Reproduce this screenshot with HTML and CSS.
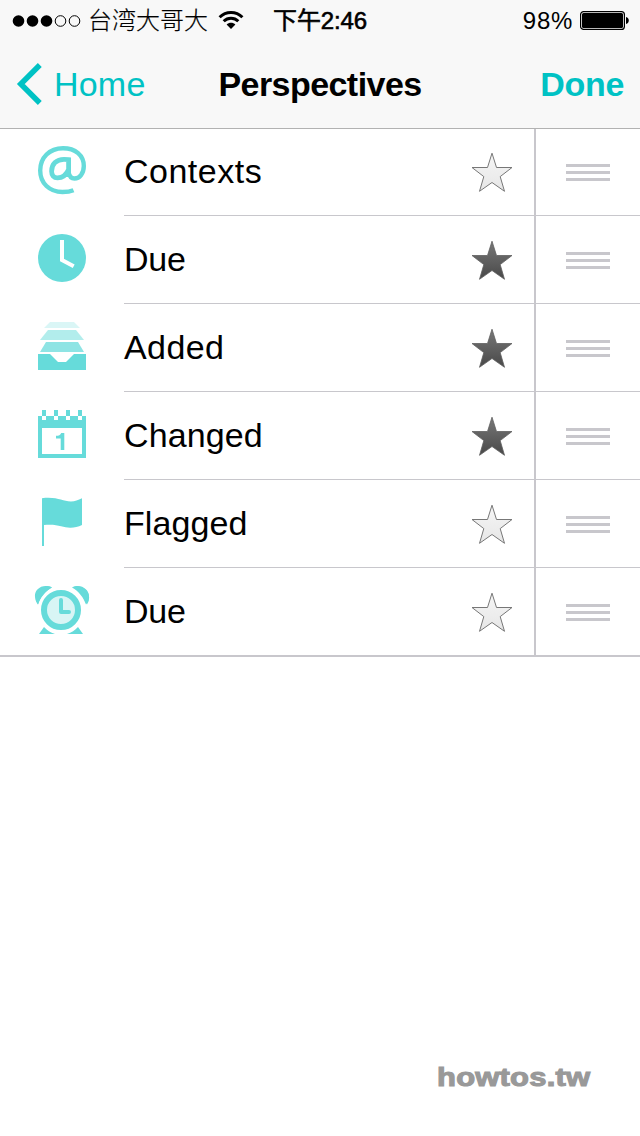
FILE: index.html
```html
<!DOCTYPE html>
<html lang="en">
<head>
<meta charset="utf-8">
<title>Perspectives</title>
<link rel="stylesheet" href="styles.css">
</head>
<body>
<svg class="defs" width="0" height="0" aria-hidden="true">
  <defs>
    <linearGradient id="light" x1="0" y1="0" x2="0" y2="1"><stop offset="0" stop-color="#f6f6f6"/><stop offset="1" stop-color="#e6e6e6"/></linearGradient>
    <linearGradient id="dark" x1="0" y1="0" x2="0" y2="1"><stop offset="0" stop-color="#787878"/><stop offset="1" stop-color="#484848"/></linearGradient>
    <symbol id="star" viewBox="0 0 44 42"><path d="M22 2.200 26.500 16.500H42L30.200 25.600 34.500 40.300 22 31.500 9.500 40.300 13.800 25.600 2 16.500H17.500Z"/></symbol>
  </defs>
</svg>
<header class="top">
  <div class="status">
    <svg class="signal" width="70" height="14" viewBox="0 0 70 14">
      <circle cx="6.500" cy="7" r="5.800"/><circle cx="20.500" cy="7" r="5.800"/><circle cx="34.500" cy="7" r="5.800"/>
      <circle class="ring" cx="48.500" cy="7" r="5.300"/><circle class="ring" cx="62.500" cy="7" r="5.300"/>
    </svg>
    <span class="carrier">台湾大哥大</span>
    <svg class="wifi" width="26" height="20" viewBox="0 0 26 20">
      <path class="arc" d="M1.600 7.200C8 .8 18 .8 24.400 7.200M5.700 11.200C9.800 7.200 16.200 7.200 20.300 11.200"/>
      <path d="M13 19 8.600 14.600C11 12.200 15 12.200 17.400 14.600Z"/>
    </svg>
    <span class="time">下午2:46</span>
    <span class="percent">98%</span>
    <svg class="battery" width="49" height="19" viewBox="0 0 49 19">
      <rect class="case" x=".6" y=".6" width="43.800" height="17.800" rx="3"/>
      <rect x="2" y="2" width="41" height="15" rx="1.500"/>
      <path d="M46 6C49.700 6.800 49.700 12.200 46 13Z"/>
    </svg>
  </div>
  <nav class="nav">
    <a class="back"><svg width="26" height="42" viewBox="0 0 26 42"><path d="M23.800 2 4.800 21 23.800 40"/></svg><span>Home</span></a>
    <h1 class="title">Perspectives</h1>
    <a class="done">Done</a>
  </nav>
</header>
<ul class="list">
  <li class="row">
    <svg class="icon" width="56" height="50" viewBox="-4 0 56 50"><path class="at" d="M35.500 44.200C31.500 45.900 28.500 46 24.500 46 11.500 46 2.200 37.200 2.200 24.500 2.200 11.500 11.500 2.200 25 2.200 37.500 2.200 45.800 9.500 45.800 20 45.800 27.500 41.500 32.500 36.500 32.500 32.500 32.500 31.300 30 30.600 26.500"/><path class="at-inner" d="M30.600 31V13.600C29 13.400 27.500 13.300 26 13.300 18.500 13.300 13.600 18 13.600 25.200 13.600 29.300 15.800 31.800 19.500 31.800 24.800 31.800 28.500 28.500 30.600 23.500"/></svg>
    <div class="main"><span class="label contexts">Contexts</span><svg class="star"><use href="#star"/></svg></div><div class="grip"><i></i><i></i><i></i></div>
  </li>
  <li class="row">
    <svg class="icon" width="56" height="50" viewBox="-4 0 56 50"><circle cx="24" cy="24" r="24"/><path class="hands" d="M24 6V26L35.700 32.300"/></svg>
    <div class="main"><span class="label due">Due</span><svg class="star on"><use href="#star"/></svg></div><div class="grip"><i></i><i></i><i></i></div>
  </li>
  <li class="row">
    <svg class="icon" width="56" height="50" viewBox="-4 0 56 50"><path opacity=".24" d="M12 0H36L42 6H6Z"/><path opacity=".5" d="M10 8H38L46 18H2Z"/><path opacity=".74" d="M8 20H40L46 30H2Z"/><path d="M0 32H12L20 40H28L36 32H48V48H0Z"/></svg>
    <div class="main"><span class="label added">Added</span><svg class="star on"><use href="#star"/></svg></div><div class="grip"><i></i><i></i><i></i></div>
  </li>
  <li class="row">
    <svg class="icon" width="56" height="50" viewBox="-4 0 56 50"><path fill-rule="evenodd" d="M0 6H4V10H8V6H16V10H20V6H28V10H32V6H40V10H44V6H48V48H0ZM4 18V44H44V18Z"/><path d="M4 0H8V6H4ZM16 0H20V6H16ZM28 0H32V6H28ZM40 0H44V6H40Z"/><path d="M22.700 40V28.500H18V25.800C20.800 25.800 22.500 25 23.200 23H26.300V40Z"/></svg>
    <div class="main"><span class="label">Changed</span><svg class="star on"><use href="#star"/></svg></div><div class="grip"><i></i><i></i><i></i></div>
  </li>
  <li class="row">
    <svg class="icon" width="56" height="50" viewBox="-4 0 56 50"><path d="M4 .2C20-1.500 24 3.500 33 3.500 37 3.400 40 2.200 44 .2V27C40 29 36 29.800 32 29.700 25 29.500 19 25.500 6 27V48H4Z"/></svg>
    <div class="main"><span class="label">Flagged</span><svg class="star"><use href="#star"/></svg></div><div class="grip"><i></i><i></i><i></i></div>
  </li>
  <li class="row">
    <svg class="icon" width="56" height="50" viewBox="-4 0 56 50"><path d="M14 1.300A11.500 11.500 0 0 0 0 18.500C2 11 7 5.500 14 1.300ZM35 1.300A11.500 11.500 0 0 1 49 18.500C47 11 42 5.500 35 1.300Z"/><path d="M14 1.500C5-3-4 3-3 11-2.800 14-1.500 16.500 0 18.500 2.500 11.500 7 5.500 14 1.500ZM34 1.500C42-3 51.500 3 51 11 50.800 14 49.500 16.500 48 18.500 45.500 11.500 41 5.500 34 1.500ZM6 41 1 48H17C12.500 46.500 9 44.300 6 41ZM40 41 45 48H29C33.500 46.500 37 44.300 40 41Z"/><circle class="face" cx="23" cy="24" r="17"/><path class="alarm" d="M23 14V26H31"/></svg>
    <div class="main"><span class="label due">Due</span><svg class="star"><use href="#star"/></svg></div><div class="grip"><i></i><i></i><i></i></div>
  </li>
</ul>
<footer class="credit">howtos.tw</footer>
</body>
</html>
```
FILE: styles.css
```css
* { box-sizing: border-box; }
body {
  margin: 0; width: 640px; height: 1136px; background: #fff; color: #000;
  font-family: "Liberation Sans", "Noto Sans CJK SC", sans-serif;
  display: flex; flex-direction: column; overflow: hidden;
}
.defs { position: absolute; }
.top { position: relative; height: 128px; flex: none; background: #f8f8f8; box-shadow: 0 1px #b2b2b2; }
.status { height: 40px; display: flex; align-items: center; padding: 1px 11px 0 12px; font-size: 24px; line-height: 40px; white-space: nowrap; }
.signal .ring { fill: none; stroke: #000; stroke-width: 1; }
.carrier { font-family: "Noto Sans CJK SC", sans-serif; font-weight: 300; -webkit-text-stroke: .2px #000; width: 120px; margin: -3px 0 0 6px; }
.wifi { margin: 0 0 2px 10px; }
.wifi .arc { fill: none; stroke: #000; stroke-width: 3; }
.time { margin-left: 29px; width: 96px; -webkit-text-stroke: .6px #000; letter-spacing: -.1px; }
.percent { margin-left: auto; letter-spacing: .7px; }
.battery { margin-left: 7px; }
.battery .case { fill: none; stroke: #000; stroke-width: 1.2; }
.nav { height: 88px; display: grid; grid-template-columns: 1fr auto 1fr; align-items: center; padding: 0 16px; font-size: 34px; line-height: 40px; }
.back { display: flex; align-items: center; gap: 12px; color: #00c2c4; letter-spacing: .2px; }
.back path { fill: none; stroke: #00c2c4; stroke-width: 5.5; }
.title { margin: 0; font-size: 34px; font-weight: 700; letter-spacing: -.55px; }
.done { color: #00c2c4; font-weight: 700; justify-self: end; letter-spacing: -.3px; }
.list { list-style: none; margin: 0; padding: 0; height: 529px; flex: none; border-bottom: 2px solid #c8c7cc; }
.row { height: 88px; display: flex; }
.row:last-child { height: 87px; }
.icon { margin: 18px 34px 0 34px; flex: none; fill: #66dbda; overflow: visible; }
.at, .at-inner { fill: none; stroke: #66dbda; stroke-width: 4.4; }
.at-inner { stroke-width: 4.8; }
.hands { fill: none; stroke: #fff; stroke-width: 4; }
.face { fill: #d8f5f5; stroke: #66dbda; stroke-width: 6; }
.alarm { fill: none; stroke: #66dbda; stroke-width: 4; stroke-linecap: round; stroke-linejoin: round; }
.main { width: 410px; display: flex; align-items: center; justify-content: space-between; padding: 0 20px 2px 0; border-bottom: 1px solid #c8c7cc; }
.label { font-size: 34px; line-height: 40px; letter-spacing: .1px; }
.contexts { letter-spacing: .5px; }
.added { letter-spacing: .4px; }
.due { letter-spacing: -.2px; }
.star { width: 44px; height: 42px; margin-top: 3px; fill: url(#light); stroke: #777; stroke-width: 1; }
.star.on { fill: url(#dark); stroke: #606060; stroke-width: .8; }
.grip { width: 106px; border-left: 2px solid #c8c7cc; border-bottom: 1px solid #c8c7cc; display: flex; flex-direction: column; gap: 4px; padding: 36px 0 0 30px; }
.grip i { width: 44px; height: 3px; background: #c8c7cc; }
.row:last-child .main, .row:last-child .grip { border-bottom: 0; }
.credit { margin: 404px 0 0 437px; width: max-content; font-size: 26px; line-height: 32px; font-weight: 700; color: #999; -webkit-text-stroke: 1.1px #999; letter-spacing: .2px; transform: scaleX(1.19); transform-origin: left; }
```
